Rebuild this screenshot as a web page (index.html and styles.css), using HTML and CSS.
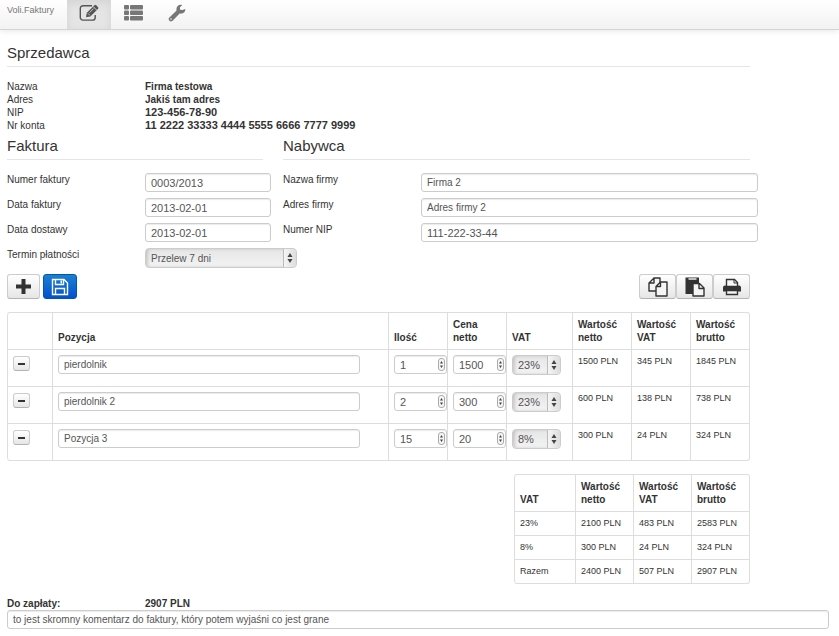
FILE: index.html
```html
<!DOCTYPE html>
<html lang="pl">
<head>
<meta charset="UTF-8">
<meta name="viewport" content="width=device-width, initial-scale=1.0">
<title>Voli.Faktury</title>
<link rel="stylesheet" href="styles.css">
</head>
<body>

<svg class="sprite" aria-hidden="true">
  <symbol id="stepper" viewBox="0 0 7 13">
    <rect x=".5" y=".5" width="6" height="12" rx="2.5" fill="#f6f6f6" stroke="#aaa"/>
    <path d="M3.500 3l1.500 2.500h-3zM3.500 10l1.500-2.500h-3z" fill="#444"/>
  </symbol>
  <symbol id="arrows" viewBox="0 0 6 10">
    <path d="M3 0l2.500 4h-5zM3 10l2.500-4h-5z" fill="#444"/>
  </symbol>
</svg>

<nav class="navbar">
  <a class="brand" href="#">Voli.Faktury</a>
  <a class="nav-link active" href="#" aria-label="Faktura">
    <svg width="20" height="18" viewBox="0 0 20 18">
      <path d="M13 1.700H4A2.700 2.700 0 0 0 1.300 4.400v9A2.700 2.700 0 0 0 4 16.100h9.500a2.700 2.700 0 0 0 2.700-2.700V11" fill="none" stroke="#555" stroke-width="1.400"/>
      <path d="M7 13.200l.8-4.400L15.500 1.200q.8-.7 1.600 0l2 2q.7.800 0 1.600l-7.700 7.700z" fill="#555"/>
      <path d="M8.800 9.300l2.100 2.100M14.300 2.700l3.300 3.300M10.500 8.600l4-4" stroke="#e5e5e5" stroke-width=".8"/>
    </svg>
  </a>
  <a class="nav-link" href="#" aria-label="Lista">
    <svg width="20" height="16" viewBox="0 0 20 16" fill="#777">
      <rect x="1" y="0" width="5" height="4.500" rx="1"/><rect x="7" y="0" width="13" height="4.500" rx="1"/>
      <rect x="1" y="5.500" width="5" height="4.500" rx="1"/><rect x="7" y="5.500" width="13" height="4.500" rx="1"/>
      <rect x="1" y="11" width="5" height="4.500" rx="1"/><rect x="7" y="11" width="13" height="4.500" rx="1"/>
    </svg>
  </a>
  <a class="nav-link" href="#" aria-label="Ustawienia">
    <svg width="18" height="18" viewBox="0 0 18 18">
      <path d="M17.300 5.100c.3 3-2.600 5.200-5.600 4.400L4.600 16.700a2.200 2.200 0 0 1-3.200-3.200l7.200-7C7.700 3.400 10 .4 13.300.7l1 .3-2.500 2.400.4 2.300 2.300.4z" fill="#777"/>
      <circle cx="3" cy="15" r=".8" fill="#f7f7f7"/>
    </svg>
  </a>
</nav>

<main>
  <div class="sheet">
    <section>
      <h2>Sprzedawca</h2>
      <dl class="seller">
        <dt>Nazwa</dt><dd>Firma testowa</dd>
        <dt>Adres</dt><dd>Jakiś tam adres</dd>
        <dt>NIP</dt><dd class="digits">123-456-78-90</dd>
        <dt>Nr konta</dt><dd class="digits">11 2222 33333 4444 5555 6666 7777 9999</dd>
      </dl>
    </section>

    <div class="parties">
      <section>
        <h2>Faktura</h2>
        <div class="field">
          <label for="number">Numer faktury</label>
          <input class="digits" type="text" id="number" value="0003/2013">
        </div>
        <div class="field">
          <label for="issued">Data faktury</label>
          <input class="digits" type="text" id="issued" value="2013-02-01">
        </div>
        <div class="field">
          <label for="delivered">Data dostawy</label>
          <input class="digits" type="text" id="delivered" value="2013-02-01">
        </div>
        <div class="field">
          <label for="payment">Termin płatności</label>
          <span class="select select-wide">
            <select id="payment"><option>Przelew 7 dni</option></select>
            <svg><use href="#arrows"/></svg>
          </span>
        </div>
      </section>

      <section>
        <h2>Nabywca</h2>
        <div class="field">
          <label for="buyer">Nazwa firmy</label>
          <input type="text" id="buyer" value="Firma 2">
        </div>
        <div class="field">
          <label for="address">Adres firmy</label>
          <input type="text" id="address" value="Adres firmy 2">
        </div>
        <div class="field">
          <label for="nip">Numer NIP</label>
          <input class="digits" type="text" id="nip" value="111-222-33-44">
        </div>
      </section>
    </div>

    <div class="toolbar">
      <button class="btn" type="button" aria-label="Dodaj pozycję">
        <svg width="15" height="15" viewBox="0 0 15 15"><path d="M7.500 0v15M0 7.500h15" stroke="#333" stroke-width="4"/></svg>
      </button>
      <button class="btn btn-primary" type="button" aria-label="Zapisz">
        <svg width="18" height="18" viewBox="0 0 18 18" fill="none" stroke="#fff" stroke-width="1.400">
          <path d="M1.500 1.500h11.500l3.500 3.500v11.500h-15z"/>
          <path d="M4.500 1.500v5h8v-5M4.500 16.500v-6h9v6"/>
          <path d="M9.500 2.500h1.500v3h-1.500z" fill="#fff" stroke="none"/>
        </svg>
      </button>
      <div class="btn-group">
        <button class="btn" type="button" aria-label="Kopiuj">
          <svg width="20" height="20" viewBox="0 0 20 20" fill="#f5f5f5" stroke="#333" stroke-width="1.400" stroke-linejoin="round">
            <path d="M6 1H12v13H1V6zM6 1v5H1"/>
            <path d="M12.500 5H19v14H8V9.500zM12.500 5v4.500H8"/>
          </svg>
        </button>
        <button class="btn" type="button" aria-label="Wklej">
          <svg width="20" height="20" viewBox="0 0 20 20">
            <path d="M.5.500h13.500V17H.5z" fill="#333"/>
            <path d="M3.500 2h8" stroke="#eee" stroke-width="1.500"/>
            <path d="M8 6.500h6.500l4.500 4.500v8H8zM14 6.500V11.500H19" fill="#f5f5f5" stroke="#333" stroke-width="1.400" stroke-linejoin="round"/>
          </svg>
        </button>
        <button class="btn" type="button" aria-label="Drukuj">
          <svg width="18" height="18" viewBox="0 0 18 18">
            <path d="M0 9.500a2 2 0 0 1 2-2h14a2 2 0 0 1 2 2V13.500H0z" fill="#333"/>
            <path d="M3.500 8.500V1.500h8l3 3v4z" fill="#f8f8f8" stroke="#333" stroke-width="1.400"/>
            <path d="M11 1.500V5h3.500" fill="none" stroke="#333"/>
            <path d="M3.500 12.500h11v4h-11z" fill="#f3f3f3" stroke="#333" stroke-width="1.400"/>
          </svg>
        </button>
      </div>
    </div>

    <table class="items">
      <colgroup>
        <col class="c-action"><col><col class="c-num"><col class="c-num"><col class="c-vat"><col class="c-num"><col class="c-num"><col class="c-num">
      </colgroup>
      <thead>
        <tr>
          <th></th><th>Pozycja</th><th>Ilość</th><th>Cena netto</th><th>VAT</th>
          <th>Wartość netto</th><th>Wartość VAT</th><th>Wartość brutto</th>
        </tr>
      </thead>
      <tbody>
        <tr>
          <td><button class="btn btn-mini" type="button" aria-label="Usuń"></button></td>
          <td><input type="text" aria-label="Pozycja" value="pierdolnik"></td>
          <td><span class="spin"><input class="digits" type="number" aria-label="Ilość" value="1"><svg><use href="#stepper"/></svg></span></td>
          <td><span class="spin"><input class="digits" type="number" aria-label="Cena netto" value="1500"><svg><use href="#stepper"/></svg></span></td>
          <td><span class="select"><select class="digits" aria-label="VAT"><option>23%</option></select><svg><use href="#arrows"/></svg></span></td>
          <td>1500 PLN</td><td>345 PLN</td><td>1845 PLN</td>
        </tr>
        <tr>
          <td><button class="btn btn-mini" type="button" aria-label="Usuń"></button></td>
          <td><input type="text" aria-label="Pozycja" value="pierdolnik 2"></td>
          <td><span class="spin"><input class="digits" type="number" aria-label="Ilość" value="2"><svg><use href="#stepper"/></svg></span></td>
          <td><span class="spin"><input class="digits" type="number" aria-label="Cena netto" value="300"><svg><use href="#stepper"/></svg></span></td>
          <td><span class="select"><select class="digits" aria-label="VAT"><option>23%</option></select><svg><use href="#arrows"/></svg></span></td>
          <td>600 PLN</td><td>138 PLN</td><td>738 PLN</td>
        </tr>
        <tr>
          <td><button class="btn btn-mini" type="button" aria-label="Usuń"></button></td>
          <td><input type="text" aria-label="Pozycja" value="Pozycja 3"></td>
          <td><span class="spin"><input class="digits" type="number" aria-label="Ilość" value="15"><svg><use href="#stepper"/></svg></span></td>
          <td><span class="spin"><input class="digits" type="number" aria-label="Cena netto" value="20"><svg><use href="#stepper"/></svg></span></td>
          <td><span class="select"><select class="digits" aria-label="VAT"><option>8%</option></select><svg><use href="#arrows"/></svg></span></td>
          <td>300 PLN</td><td>24 PLN</td><td>324 PLN</td>
        </tr>
      </tbody>
    </table>

    <table class="summary">
      <colgroup>
        <col class="c-rate"><col><col><col>
      </colgroup>
      <thead>
        <tr><th>VAT</th><th>Wartość netto</th><th>Wartość VAT</th><th>Wartość brutto</th></tr>
      </thead>
      <tbody>
        <tr><td>23%</td><td>2100 PLN</td><td>483 PLN</td><td>2583 PLN</td></tr>
        <tr><td>8%</td><td>300 PLN</td><td>24 PLN</td><td>324 PLN</td></tr>
        <tr><td>Razem</td><td>2400 PLN</td><td>507 PLN</td><td>2907 PLN</td></tr>
      </tbody>
    </table>
  </div>

  <div class="total"><span>Do zapłaty:</span><span>2907 PLN</span></div>
  <input type="text" aria-label="Komentarz" value="to jest skromny komentarz do faktury, który potem wyjaśni co jest grane">
</main>

</body>
</html>
```

FILE: styles.css
```css
*, *::before, *::after { box-sizing: border-box; }

:root {
  --text: #333;
  --muted: #777;
  --border: #ddd;
  --input-border: #ccc;
  --label-col: 138px;
}

body {
  margin: 0;
  font: 10px/13px "Liberation Sans", Arial, sans-serif;
  color: var(--text);
  background: #fff;
}

.sprite { display: none; }

/* Navbar */
.navbar {
  display: flex;
  height: 30px;
  padding-left: 7px;
  background: linear-gradient(#fff, #f2f2f2);
  border-bottom: 1px solid #d4d4d4;
  box-shadow: 0 1px 6px rgba(0,0,0,0.1);
}

.brand {
  width: 60px;
  padding-top: 4px;
  font-size: 9px;
  color: var(--muted);
  text-decoration: none;
}

.nav-link {
  display: flex;
  align-items: center;
  justify-content: center;
  width: 44px;
  padding-bottom: 3px;
}

.nav-link.active {
  background: #e5e5e5;
  box-shadow: inset 0 3px 8px rgba(0,0,0,0.08);
}

/* Layout */
main { padding: 13px 10px 7px 7px; }

.sheet { max-width: 743px; }

h2 {
  margin: 0 0 13px;
  padding-bottom: 3px;
  border-bottom: 1px solid #e5e5e5;
  font-size: 15px;
  font-weight: normal;
  line-height: 20px;
}

.seller {
  display: grid;
  grid-template-columns: var(--label-col) 1fr;
  margin: 0;
}

.seller dd {
  margin: 0;
  font-weight: bold;
}

.digits { font-size: 11px; }

.parties {
  display: grid;
  grid-template-columns: minmax(0, 256fr) minmax(0, 467fr);
  gap: 20px;
  margin-top: 4px;
}

.field {
  display: grid;
  grid-template-columns: var(--label-col) minmax(0, 1fr);
  align-items: start;
  height: 25px;
  margin-right: -8px;
}

/* Form controls */
input, select {
  width: 100%;
  height: 19px;
  margin: 0;
  padding: 0 5px;
  border: 1px solid var(--input-border);
  border-radius: 3px;
  font-family: inherit;
  font-size: 10px;
  color: #555;
  background: #fff;
  box-shadow: inset 0 1px 1px rgba(0,0,0,0.08);
}

input { display: block; }

input.digits, select.digits { font-size: 11px; }

input[type="number"] { appearance: textfield; }

input[type="number"]::-webkit-inner-spin-button { display: none; }

.spin, .select {
  position: relative;
  display: block;
}

.spin svg {
  position: absolute;
  top: 3px;
  right: 2px;
  width: 7px;
  height: 13px;
  pointer-events: none;
}

.select select {
  display: block;
  height: 20px;
  appearance: none;
  border-radius: 4px;
  background: linear-gradient(#e6e6e6, #f3f3f3);
  box-shadow: inset 2px 0 3px rgba(0,0,0,0.15);
}

.select::after {
  content: '';
  position: absolute;
  top: 1px;
  bottom: 1px;
  right: 1px;
  width: 13px;
  border-left: 1px solid #bbb;
  border-radius: 0 3px 3px 0;
  background: linear-gradient(90deg, #f5f5f5, #ddd);
  pointer-events: none;
}

.select svg {
  position: absolute;
  z-index: 1;
  top: 5px;
  right: 4px;
  width: 6px;
  height: 10px;
  pointer-events: none;
}

.select-wide { width: 152px; }

/* Buttons */
.toolbar {
  display: flex;
  gap: 3px;
  margin: 1px 0 13px;
}

.btn {
  display: flex;
  align-items: center;
  justify-content: center;
  width: 33px;
  height: 25px;
  padding: 0;
  border: 1px solid #ccc;
  border-bottom-color: #b3b3b3;
  border-radius: 3px;
  background: linear-gradient(#fff, #e6e6e6);
}

.btn-primary {
  width: 34px;
  border-color: #0055b3;
  background: linear-gradient(#1a80d0, #0550cc);
}

.btn-group {
  display: flex;
  margin-left: auto;
}

.btn-group .btn { width: 37px; }

.btn-mini {
  width: 17px;
  height: 15px;
  margin-top: 1px;
}

.btn-mini::before {
  content: '';
  width: 7px;
  height: 2px;
  background: #333;
}

/* Tables */
table {
  table-layout: fixed;
  border: 1px solid var(--border);
  border-left: 0;
  border-radius: 3px;
  border-spacing: 0;
}

th, td {
  padding: 5px;
  border-left: 1px solid var(--border);
  text-align: left;
  vertical-align: top;
}

th { vertical-align: bottom; }

td {
  border-top: 1px solid var(--border);
  font-size: 9px;
}

th:first-child { border-top-left-radius: 3px; }
tr:last-child td:first-child { border-bottom-left-radius: 3px; }

.items { width: 100%; }

.items td { height: 37px; padding-bottom: 0; }

.items td > input { width: 93%; }

.items .spin { margin-right: -5px; }

.items .select { width: 49px; }

.c-action { width: 45px; }
.c-num { width: 59px; }
.c-vat { width: 66px; }
.c-rate { width: 61px; }

.summary {
  width: 236px;
  margin: 13px 0 13px auto;
}

.total {
  display: grid;
  grid-template-columns: var(--label-col) 1fr;
  font-weight: bold;
}
```
